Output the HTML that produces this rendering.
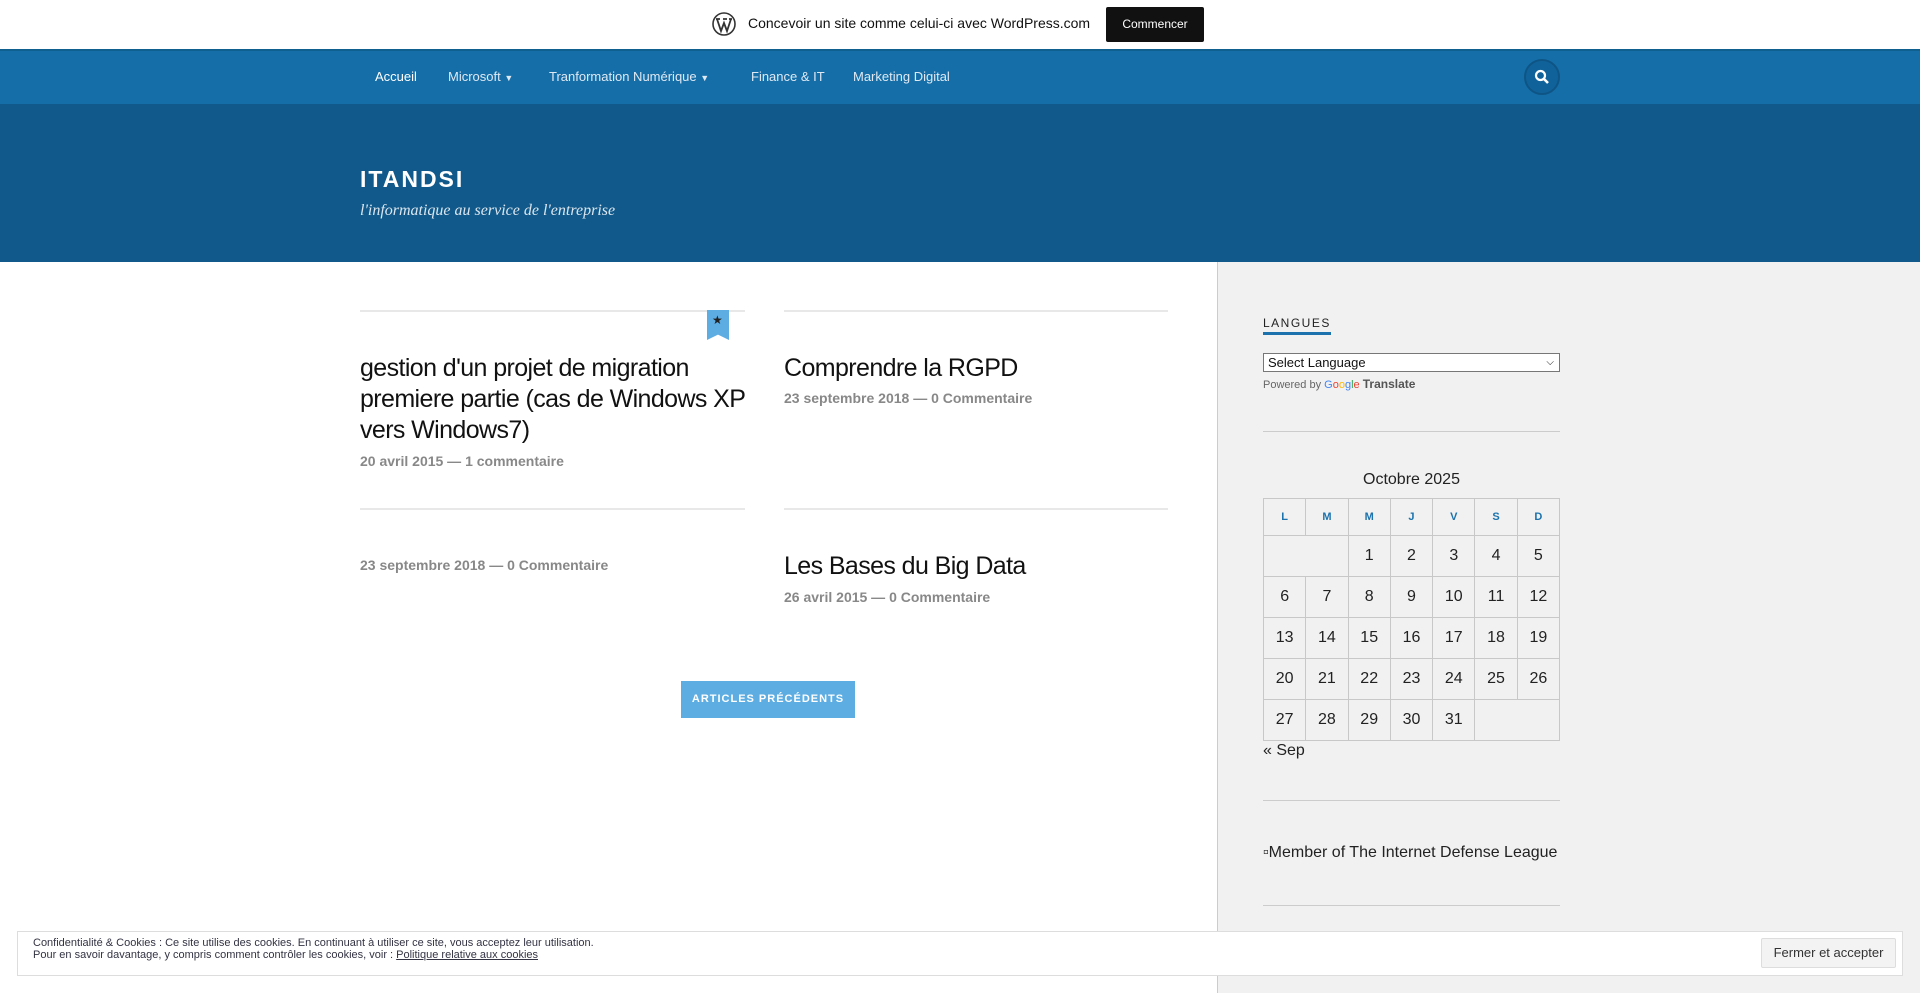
<!DOCTYPE html>
<html><head><meta charset="utf-8"><style>
*{box-sizing:border-box;margin:0;padding:0}
body{width:1920px;height:993px;overflow:hidden;background:#fff;font-family:"Liberation Sans",sans-serif;position:relative;color:#111}
.a{position:absolute;white-space:nowrap}
#top{position:absolute;left:0;top:0;width:1920px;height:49px;background:#fff}
#nav{position:absolute;left:0;top:49px;width:1920px;height:55px;background:#156ea8;border-top:2px solid #10608f}
#nav .a{color:#dfe9f3;font-size:13px;top:18px}
#hdr{position:absolute;left:0;top:104px;width:1920px;height:158px;background:#11598a}
#side{position:absolute;left:1217px;top:262px;width:703px;height:731px;background:#f1f1f1;border-left:1px solid #ccc}
.hr{position:absolute;height:2px;background:#e8e8e8}
.t{font-size:25px;line-height:31px;color:#111;white-space:normal;letter-spacing:-0.6px}
.m{font-size:14px;font-weight:bold;color:#888}
table{position:absolute;left:1263px;top:498px;width:297px;border-collapse:collapse;font-size:16px;color:#222}
td{border:1px solid #c8c8c8;text-align:center;height:41px}
th{border:1px solid #c8c8c8;height:37px;color:#1b72ad;font-size:11px}
.shr{position:absolute;left:1263px;width:297px;height:1px;background:#ccc}
</style></head><body>
<div id="top">
<svg class="a" style="left:712px;top:12px" width="24" height="24" viewBox="0 0 24 24"><circle cx="12" cy="12" r="11" fill="none" stroke="#333" stroke-width="1.6"/><path d="M5 7l4 12 3-8 3 8 4-12M4 7h4M11 7h4M17 7h3" stroke="#333" stroke-width="1.8" fill="none"/></svg>
<div class="a" style="left:748px;top:15px;font-size:14px;color:#111">Concevoir un site comme celui-ci avec WordPress.com</div>
<div class="a" style="left:1106px;top:7px;width:98px;height:35px;background:#111;border-radius:2px;color:#fff;font-size:12px;text-align:center;line-height:35px">Commencer</div>
</div>
<div id="nav">
<div class="a" style="left:375px;color:#fff">Accueil</div>
<div class="a" style="left:448px">Microsoft <span style="font-size:9px">&#9660;</span></div>
<div class="a" style="left:549px">Tranformation Numérique <span style="font-size:9px">&#9660;</span></div>
<div class="a" style="left:751px">Finance &amp; IT</div>
<div class="a" style="left:853px">Marketing Digital</div>
<div class="a" style="left:1524px;top:8px;width:36px;height:36px;border-radius:50%;background:#10639a;border:2px solid #0e5585"></div>
<svg class="a" style="left:1534px;top:18px" width="16" height="16" viewBox="0 0 16 16"><circle cx="6.5" cy="6.5" r="4.5" fill="none" stroke="#fff" stroke-width="2.2"/><path d="M10 10l4 4" stroke="#fff" stroke-width="2.6"/></svg>
</div>
<div id="hdr">
<div class="a" style="left:360px;top:62px;font-size:23px;font-weight:bold;color:#fff;letter-spacing:2px">ITANDSI</div>
<div class="a" style="left:360px;top:98px;font-family:'Liberation Serif',serif;font-style:italic;font-size:16px;color:#dbe6ef">l'informatique au service de l'entreprise</div>
</div>
<div id="side"></div>
<div class="hr" style="left:360px;top:310px;width:385px"></div>
<div class="hr" style="left:784px;top:310px;width:384px"></div>
<div class="a" style="left:707px;top:310px;width:22px;height:30px;background:#5dade2;clip-path:polygon(0 0,100% 0,100% 100%,50% 82%,0 100%)"></div>
<div class="a" style="left:712px;top:313px;font-size:12px;color:#222">&#9733;</div>
<div class="a t" style="left:360px;top:353px;width:395px">gestion d'un projet de migration premiere partie (cas de Windows XP vers Windows7)</div>
<div class="a m" style="left:360px;top:453px">20 avril 2015 — 1 commentaire</div>
<div class="a t" style="left:784px;top:353px">Comprendre la RGPD</div>
<div class="a m" style="left:784px;top:390px">23 septembre 2018 — 0 Commentaire</div>
<div class="hr" style="left:360px;top:508px;width:385px"></div>
<div class="hr" style="left:784px;top:508px;width:384px"></div>
<div class="a m" style="left:360px;top:557px">23 septembre 2018 — 0 Commentaire</div>
<div class="a t" style="left:784px;top:551px">Les Bases du Big Data</div>
<div class="a m" style="left:784px;top:589px">26 avril 2015 — 0 Commentaire</div>
<div class="a" style="left:681px;top:681px;width:174px;height:37px;background:#5dade2;color:#fff;font-size:11px;font-weight:bold;letter-spacing:1px;text-align:center;line-height:37px">ARTICLES PRÉCÉDENTS</div>

<div class="a" style="left:1263px;top:316px;font-size:12px;letter-spacing:1.5px;color:#222;border-bottom:3px solid #1b72ad;padding-bottom:2px">LANGUES</div>
<div class="a" style="left:1263px;top:353px;width:297px;height:19px;border:1px solid #777;background:#fff;font-size:13px;padding-left:4px;line-height:17px">Select Language<span style="position:absolute;right:5px;font-size:10px">&#9013;</span></div>
<div class="a" style="left:1263px;top:377px;font-size:11px;color:#666">Powered by <span style="color:#4285f4">G</span><span style="color:#ea4335">o</span><span style="color:#fbbc05">o</span><span style="color:#4285f4">g</span><span style="color:#34a853">l</span><span style="color:#ea4335">e</span> <b style="color:#555;font-size:12px">Translate</b></div>
<div class="shr" style="top:431px"></div>
<div class="a" style="left:1263px;top:471px;width:297px;text-align:center;font-size:16px;color:#222">Octobre 2025</div>
<table><tr><th>L</th><th>M</th><th>M</th><th>J</th><th>V</th><th>S</th><th>D</th></tr>
<tr><td colspan="2"></td><td>1</td><td>2</td><td>3</td><td>4</td><td>5</td></tr>
<tr><td>6</td><td>7</td><td>8</td><td>9</td><td>10</td><td>11</td><td>12</td></tr>
<tr><td>13</td><td>14</td><td>15</td><td>16</td><td>17</td><td>18</td><td>19</td></tr>
<tr><td>20</td><td>21</td><td>22</td><td>23</td><td>24</td><td>25</td><td>26</td></tr>
<tr><td>27</td><td>28</td><td>29</td><td>30</td><td>31</td><td colspan="2"></td></tr></table>
<div class="a" style="left:1263px;top:742px;font-size:16px;color:#222">« Sep</div>
<div class="shr" style="top:800px"></div>
<div class="a" style="left:1263px;top:844px;font-size:16px;color:#222">&#9643;Member of The Internet Defense League</div>
<div class="shr" style="top:905px"></div>

<div class="a" style="left:17px;top:931px;width:1886px;height:45px;background:#fff;border:1px solid #ddd"></div>
<div class="a" style="left:33px;top:937px;font-size:11px;line-height:12px;color:#334">Confidentialité &amp; Cookies : Ce site utilise des cookies. En continuant à utiliser ce site, vous acceptez leur utilisation.<br>Pour en savoir davantage, y compris comment contrôler les cookies, voir : <u>Politique relative aux cookies</u></div>
<div class="a" style="left:1761px;top:938px;width:135px;height:30px;background:#f3f3f3;border:1px solid #ddd;border-radius:2px;font-size:13px;color:#333;text-align:center;line-height:28px">Fermer et accepter</div>
</body></html>
